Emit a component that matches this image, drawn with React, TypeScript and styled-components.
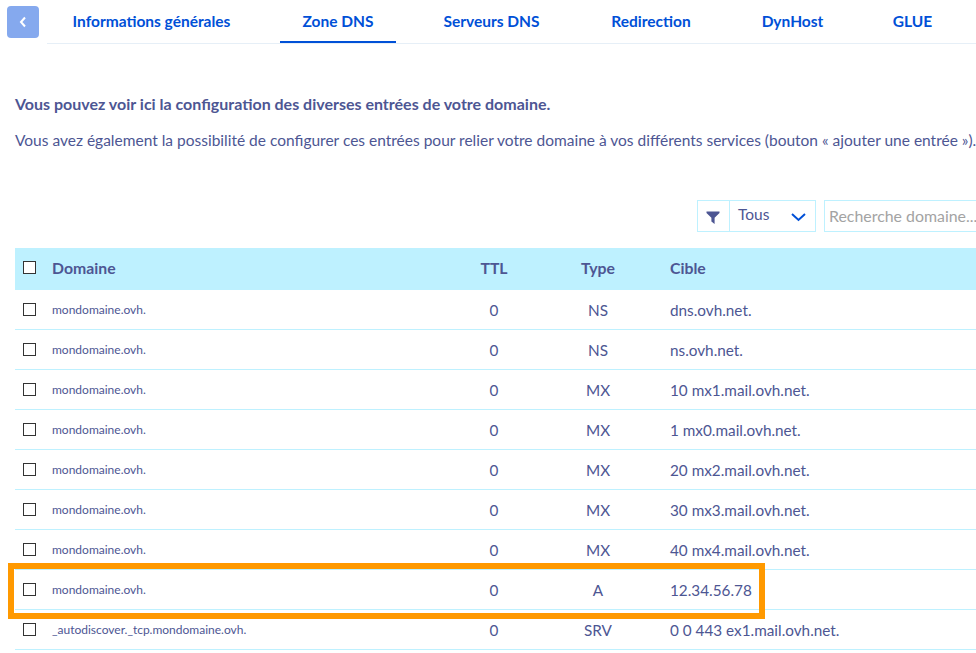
import styled, { createGlobalStyle } from 'styled-components';

const rows = [
  { domain: 'mondomaine.ovh.', type: 'NS', target: 'dns.ovh.net.' },
  { domain: 'mondomaine.ovh.', type: 'NS', target: 'ns.ovh.net.' },
  { domain: 'mondomaine.ovh.', type: 'MX', target: '10 mx1.mail.ovh.net.' },
  { domain: 'mondomaine.ovh.', type: 'MX', target: '1 mx0.mail.ovh.net.' },
  { domain: 'mondomaine.ovh.', type: 'MX', target: '20 mx2.mail.ovh.net.' },
  { domain: 'mondomaine.ovh.', type: 'MX', target: '30 mx3.mail.ovh.net.' },
  { domain: 'mondomaine.ovh.', type: 'MX', target: '40 mx4.mail.ovh.net.' },
  { domain: 'mondomaine.ovh.', type: 'A', target: '12.34.56.78' },
  { domain: '_autodiscover._tcp.mondomaine.ovh.', type: 'SRV', target: '0 0 443 ex1.mail.ovh.net.' },
];

const tabs = [
  { label: 'Informations générales', width: 209 },
  { label: 'Zone DNS', width: 116 },
  { label: 'Serveurs DNS', width: 143 },
  { label: 'Redirection', width: 128 },
  { label: 'DynHost', width: 107 },
  { label: 'GLUE', width: 85 },
];

export default function App() {
  return (
    <Page>
      <GlobalStyle />
      <TopBar>
        <BackButton aria-label="Retour">
          <svg width="8" height="12" viewBox="0 0 8 12" fill="none">
            <path d="M6 1.5 2 6l4 4.5" stroke="#fff" strokeWidth="2" />
          </svg>
        </BackButton>
        <Tabs>
          {tabs.map((tab) => (
            <Tab key={tab.label} $width={tab.width} $active={tab.label === 'Zone DNS'}>
              {tab.label}
            </Tab>
          ))}
        </Tabs>
      </TopBar>

      <Content>
        <Lead>Vous pouvez voir ici la configuration des diverses entrées de votre domaine.</Lead>
        <Intro>
          Vous avez également la possibilité de configurer ces entrées pour relier votre domaine à vos différents
          services (bouton « ajouter une entrée »).
        </Intro>

        <Toolbar>
          <FilterGroup>
            <FilterIcon>
              <svg width="14" height="13" viewBox="0 0 14 13">
                <path d="M0.5 0.5h13v1.6L8.6 6.8V13L5.4 10.6V6.8L0.5 2.1z" fill="#4d5693" />
              </svg>
            </FilterIcon>
            <FilterSelect>
              <span>Tous</span>
              <svg width="15" height="9" viewBox="0 0 15 9" fill="none">
                <path d="M1 1l6.5 6L14 1" stroke="#0050d7" strokeWidth="2" />
              </svg>
            </FilterSelect>
          </FilterGroup>
          <SearchInput placeholder="Recherche domaine..." />
        </Toolbar>

        <TableWrap>
          <HeaderRow>
            <Check />
            <span>Domaine</span>
            <Centered>TTL</Centered>
            <Centered>Type</Centered>
            <TargetCell>Cible</TargetCell>
          </HeaderRow>
          {rows.map((row) => (
            <Row key={row.target}>
              <Check />
              <DomainCell>{row.domain}</DomainCell>
              <Centered>0</Centered>
              <Centered>{row.type}</Centered>
              <TargetCell>{row.target}</TargetCell>
            </Row>
          ))}
          <Highlight />
        </TableWrap>
      </Content>
    </Page>
  );
}

const GlobalStyle = createGlobalStyle`
  html, body {
    margin: 0;
    background: #fff;
    overflow: hidden;
  }
  body {
    font-family: Lato, "Liberation Sans", sans-serif;
    color: #4d5693;
  }
`;

const Page = styled.div`
  width: 976px;
  height: 653px;
  overflow: hidden;
`;

const TopBar = styled.div`
  display: flex;
  align-items: flex-start;
  padding: 6px 0 0 7px;
  height: 38px;
`;

const BackButton = styled.button`
  width: 32px;
  height: 32px;
  flex: none;
  display: flex;
  align-items: center;
  justify-content: center;
  padding: 0;
  border: 0;
  border-radius: 4px;
  background: #85a9ee;
`;

const Tabs = styled.div`
  display: flex;
  gap: 24px;
  flex: 1;
  height: 38px;
  margin-left: 8px;
  box-sizing: border-box;
  border-bottom: 1px solid #e6eff7;
`;

const Tab = styled.div<{ $active?: boolean; $width: number }>`
  flex: none;
  width: ${(p) => p.$width}px;
  height: 37px;
  box-sizing: border-box;
  text-align: center;
  line-height: 31px;
  font-size: 15.5px;
  font-weight: 700;
  color: #0050d7;
  white-space: nowrap;
  border-bottom: ${(p) => (p.$active ? '2px solid #0050d7' : '0')};
`;

const Content = styled.div`
  padding: 51px 0 0 15px;
`;

const Lead = styled.p`
  margin: 0;
  font-size: 16px;
  line-height: 18px;
  font-weight: 700;
  white-space: nowrap;
`;

const Intro = styled.p`
  margin: 17px 0 0;
  font-size: 15.5px;
  line-height: 20px;
  white-space: nowrap;
`;

const Toolbar = styled.div`
  display: flex;
  gap: 8px;
  margin-top: 50px;
  margin-left: 682px;
  width: 400px;
  height: 32px;
`;

const FilterGroup = styled.div`
  display: flex;
  width: 119px;
  flex: none;
  box-sizing: border-box;
  border: 1px solid #bef1ff;
`;

const FilterIcon = styled.div`
  width: 32px;
  flex: none;
  display: flex;
  align-items: center;
  justify-content: center;
  box-sizing: border-box;
  padding: 2px 2px 0 0;
  border-right: 1px solid #bef1ff;
`;

const FilterSelect = styled.div`
  flex: 1;
  display: flex;
  align-items: center;
  justify-content: space-between;
  padding: 0 9px 0 8px;
  font-size: 15.5px;
  span {
    margin-top: -5px;
  }
  svg {
    margin-top: 2px;
  }
`;

const SearchInput = styled.input`
  width: 240px;
  height: 32px;
  box-sizing: border-box;
  padding: 0 4px 2px;
  border: 1px solid #bef1ff;
  font-family: inherit;
  font-size: 15.9px;
  outline: 0;
  &::placeholder {
    color: #a3a3a3;
    opacity: 1;
  }
`;

const TableWrap = styled.div`
  position: relative;
  margin-top: 16px;
  width: 1000px;
`;

const Check = styled.i`
  display: block;
  width: 13px;
  height: 13px;
  margin: -1px 0 0 8px;
  box-sizing: border-box;
  border: 1px solid #333;
  background: #fff;
`;

const HeaderRow = styled.div`
  display: grid;
  grid-template-columns: 37px 403px 78px 130px 1fr;
  align-items: center;
  height: 42px;
  box-sizing: border-box;
  padding-bottom: 4px;
  background: #bef1ff;
  font-size: 15.8px;
  font-weight: 700;
  ${Check} {
    margin-top: 0;
  }
`;

const Row = styled.div`
  display: grid;
  grid-template-columns: 37px 403px 78px 130px 1fr;
  align-items: center;
  height: 40px;
  box-sizing: border-box;
  border-bottom: 1px solid #bef1ff;
  font-size: 15.3px;
`;

const DomainCell = styled.span`
  font-size: 12px;
  margin-top: -1px;
`;

const Centered = styled.span`
  text-align: center;
`;

const TargetCell = styled.span`
  padding-left: 7px;
`;

const Highlight = styled.div`
  position: absolute;
  left: -7px;
  top: 315px;
  width: 757px;
  height: 56px;
  box-sizing: border-box;
  border: 6px solid #ff9900;
  pointer-events: none;
`;
